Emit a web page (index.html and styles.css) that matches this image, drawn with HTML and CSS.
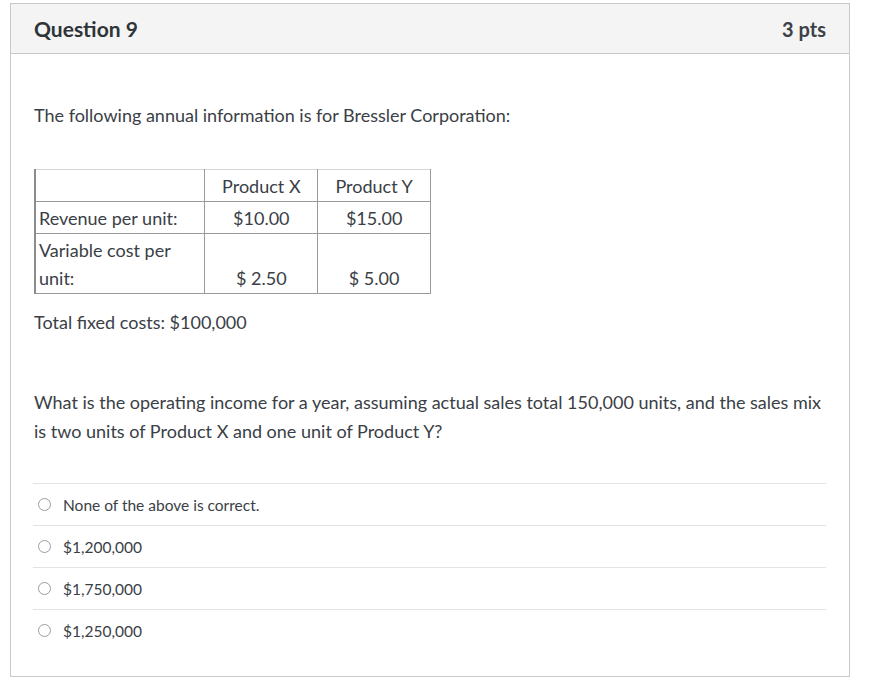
FILE: index.html
```html
<!DOCTYPE html>
<html lang="en">
<head>
<meta charset="utf-8">
<title>Question 9</title>
<link rel="stylesheet" href="styles.css">
</head>
<body>
<div class="question">
  <div class="q-header">
    <h2 class="q-title">Question 9</h2>
    <span class="q-points">3 pts</span>
  </div>
  <div class="q-body">
    <p class="intro">The following annual information is for Bressler Corporation:</p>
    <table class="data">
      <tr>
        <td class="label"></td>
        <td class="val">Product X</td>
        <td class="val">Product Y</td>
      </tr>
      <tr>
        <td class="label">Revenue per unit:</td>
        <td class="val">$10.00</td>
        <td class="val">$15.00</td>
      </tr>
      <tr>
        <td class="label">Variable cost per unit:</td>
        <td class="val">$ 2.50</td>
        <td class="val">$ 5.00</td>
      </tr>
    </table>
    <p class="fixed">Total fixed costs: $100,000</p>
    <p class="prompt">What is the operating income for a year, assuming actual sales total 150,000 units, and the sales mix is two units of Product X and one unit of Product Y?</p>
    <div class="answers">
      <label class="answer"><span class="radio"></span><span class="answer-text">None of the above is correct.</span></label>
      <label class="answer"><span class="radio"></span><span class="answer-text">$1,200,000</span></label>
      <label class="answer"><span class="radio"></span><span class="answer-text">$1,750,000</span></label>
      <label class="answer"><span class="radio"></span><span class="answer-text">$1,250,000</span></label>
    </div>
  </div>
</div>
</body>
</html>
```
FILE: styles.css
```css
html, body {
  margin: 0;
  padding: 0;
  background: #ffffff;
}
body {
  font-family: Lato, "Open Sans", "Liberation Sans", sans-serif;
  color: #3a4046;
  padding: 3px 0 0 10px;
}
.question {
  width: 838px;
  border: 1px solid #c9c9c9;
  box-sizing: content-box;
}
.q-header {
  display: flex;
  justify-content: space-between;
  align-items: center;
  height: 49px;
  padding: 0 23px 0 23px;
  background: #f4f4f4;
  border-bottom: 1px solid #c9c9c9;
}
.q-title {
  margin: 0;
  font-size: 21px;
  font-weight: 700;
  color: #2f3439;
}
.q-points {
  font-size: 20px;
  font-weight: 700;
  color: #3c4247;
}
.q-body {
  padding: 47px 22px 25px 23px;
  font-size: 18px;
  line-height: 28px;
}
.q-body p {
  margin: 0;
}
.intro {
  margin-bottom: 40px !important;
}
.data {
  border-collapse: collapse;
  width: 397px;
  border-left: 2px solid #8c8c8c;
}
.data td {
  border: 1px solid #9a9a9a;
  padding: 2px 3px 1px 3px;
  vertical-align: bottom;
  line-height: 28px;
}
.data tr:first-child td {
  border-top-color: #d6d6d6;
}
.data .label {
  width: 163px;
  text-align: left;
}
.data .val {
  width: 106px;
  text-align: center;
}
.fixed {
  margin-top: 14px !important;
}
.prompt {
  margin-top: 52px !important;
  line-height: 29px;
}
.answers {
  margin-top: 37px;
  width: 793px;
  margin-left: -1px;
}
.answer {
  display: flex;
  align-items: center;
  height: 41px;
  border-top: 1px solid #e3e3e3;
  padding-left: 5px;
  font-size: 15.5px;
}
.radio {
  width: 11px;
  height: 11px;
  border: 1px solid #9d9d9d;
  border-radius: 50%;
  margin-right: 12px;
  flex: none;
}
```
